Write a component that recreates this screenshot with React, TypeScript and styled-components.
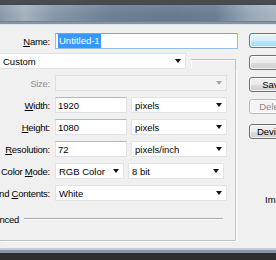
import React from "react";
import styled, { createGlobalStyle } from "styled-components";

const GlobalStyle = createGlobalStyle`
  html, body {
    margin: 0;
    padding: 0;
    background: #2e2e2e;
  }
  body {
    font-family: "Liberation Sans", Arial, sans-serif;
    font-size: 9.5px;
    color: #000;
  }
`;

const Window = styled.div`
  width: 276px;
  height: 260px;
  overflow: hidden;
  display: flex;
  flex-direction: column;
`;

const TitleBar = styled.div`
  height: 25px;
  flex: none;
  display: flex;
  flex-direction: column;
  background: #4a4a4a;
  border-top: 3px solid #4b4b4b;
  box-sizing: border-box;
`;

const Glass = styled.div`
  flex: 1;
  border-top: 2px solid #3e4b5b;
  border-bottom: 2px solid #8494a5;
  box-shadow: inset 0 -1px 0 #6f8194;
  background:
    linear-gradient(180deg, rgba(255, 255, 255, 0.1), rgba(255, 255, 255, 0) 60%),
    linear-gradient(
      90deg,
      #8998a9 0%,
      #a4b1be 9%,
      #8696a8 20%,
      #6d7f94 40%,
      #66798f 62%,
      #6a7d93 78%,
      #97a7b7 90%,
      #a9b5c2 100%
    );
`;

const TitleEdge = styled.div`
  height: 1px;
  background: #dfe6ec;
`;

const Body = styled.div`
  height: 223px;
  flex: none;
  display: flex;
  background: #f0f0f0;
  padding-top: 8px;
  box-sizing: border-box;
`;

const Main = styled.div`
  width: 238px;
  flex: none;
  display: flex;
  flex-direction: column;
`;

const Row = styled.div`
  display: grid;
  grid-template-columns: 50px auto;
  column-gap: 5px;
  height: 16px;
`;

const Fields = styled.div`
  display: flex;
  gap: 4px;
`;

const Label = styled.div<{ $disabled?: boolean }>`
  display: flex;
  justify-content: flex-end;
  align-items: center;
  overflow: hidden;
  white-space: nowrap;
  letter-spacing: -0.25px;
  color: ${(p) => (p.$disabled ? "#8d8d8d" : "#000")};
`;

const TextBox = styled.div<{ $w: number; $focused?: boolean }>`
  width: ${(p) => p.$w}px;
  box-sizing: border-box;
  display: flex;
  align-items: center;
  padding-left: 2px;
  background: #fff;
  border: 1px solid ${(p) => (p.$focused ? "#8fc0ea" : "#dde1e6")};
  border-top-color: ${(p) => (p.$focused ? "#6fa8dc" : "#b4b8bf")};
  white-space: nowrap;
`;

const Selected = styled.span`
  background: #3399ff;
  color: #fff;
  padding: 1px 1px 2px;
`;

const ComboBox = styled.div<{ $w: number; $disabled?: boolean; $open?: boolean }>`
  width: ${(p) => p.$w}px;
  box-sizing: border-box;
  display: flex;
  align-items: center;
  justify-content: space-between;
  padding: 0 4px 0 3px;
  background: ${(p) => (p.$disabled ? "#f3f3f3" : "#fff")};
  border: 1px solid ${(p) => (p.$disabled ? "#e0e0e0" : "#e3e3e3")};
  border-left-width: ${(p) => (p.$open ? 0 : 1)}px;
  white-space: nowrap;
`;

const Arrow = styled.span<{ $disabled?: boolean }>`
  width: 0;
  height: 0;
  border-left: 3px solid transparent;
  border-right: 3px solid transparent;
  border-top: 4px solid ${(p) => (p.$disabled ? "#a6a6a6" : "#111")};
`;

const PresetRow = styled.div`
  display: flex;
  height: 16px;
  margin-top: 4px;
`;

const Corner = styled.div`
  width: 44px;
  margin: 6px 0 0 5px;
  border-top: 1px solid #c2c2c2;
  border-right: 1px solid #c2c2c2;
  box-shadow: inset 1px 1px 0 #fff;
`;

const Group = styled.div`
  width: 236px;
  box-sizing: border-box;
  height: 172px;
  display: flex;
  flex-direction: column;
  padding-top: 6px;
  border-right: 1px solid #c2c2c2;
  border-bottom: 1px solid #c2c2c2;
  box-shadow: 1px 1px 0 #fff;
`;

const Rows = styled.div`
  display: flex;
  flex-direction: column;
  gap: 6px;
`;

const AdvancedRow = styled.div`
  display: flex;
  align-items: center;
  gap: 5px;
  height: 12px;
  margin-top: 12px;
`;

const AdvancedLabel = styled.div`
  width: 19px;
  display: flex;
  justify-content: flex-end;
  overflow: hidden;
  white-space: nowrap;
  letter-spacing: -0.25px;
`;

const Rule = styled.div`
  width: 199px;
  height: 0;
  border-top: 1px solid #a9a9a9;
  border-bottom: 1px solid #fff;
`;

const Side = styled.div`
  margin-left: 11px;
  display: flex;
  flex-direction: column;
  gap: 7px;
`;

const Button = styled.div<{ $default?: boolean; $disabled?: boolean; $space?: number }>`
  width: 86px;
  height: 15px;
  flex: none;
  box-sizing: border-box;
  margin-top: ${(p) => p.$space ?? 0}px;
  display: flex;
  align-items: center;
  justify-content: center;
  white-space: nowrap;
  border-radius: 3px;
  border: 1px solid
    ${(p) => (p.$default ? "#3c7fb1" : p.$disabled ? "#b5b9bc" : "#707070")};
  color: ${(p) => (p.$disabled ? "#8a8a8a" : "#000")};
  background: ${(p) =>
    p.$default
      ? "linear-gradient(180deg, #e6f5fd 0%, #d5eefc 50%, #b9e3fa 51%, #a9dbf7 100%)"
      : p.$disabled
      ? "#f4f4f4"
      : "linear-gradient(180deg, #f2f2f2 0%, #ebebeb 50%, #dddddd 51%, #cfcfcf 100%)"};
  box-shadow: inset 0 0 0 1px ${(p) => (p.$disabled ? "#fbfbfb" : "rgba(255,255,255,0.7)")};
`;

const Info = styled.div`
  margin: 48px 0 0 16px;
  white-space: nowrap;
`;

const BottomFrame = styled.div`
  flex: 1;
  background: #2e2e2e;
  border-top: 2px solid #c3ccd5;
  box-shadow: inset 0 3px 0 #8895a3;
`;

const Combo = ({ value, w, disabled, open }: { value: string; w: number; disabled?: boolean; open?: boolean }) => (
  <ComboBox $w={w} $disabled={disabled} $open={open}>
    <span>{value}</span>
    <Arrow $disabled={disabled} />
  </ComboBox>
);

export default function App() {
  return (
    <>
      <GlobalStyle />
      <Window>
        <TitleBar>
          <Glass />
          <TitleEdge />
        </TitleBar>
        <Body>
          <Main>
            <Row>
              <Label>
                <span>
                  <u>N</u>ame:
                </span>
              </Label>
              <TextBox $w={183} $focused>
                <Selected>Untitled-1</Selected>
              </TextBox>
            </Row>
            <PresetRow>
              <Combo value="Custom" w={186} open />
              <Corner />
            </PresetRow>
            <Group>
              <Rows>
                <Row>
                  <Label $disabled>Size:</Label>
                  <Combo value="" w={172} disabled />
                </Row>
                <Row>
                  <Label>
                    <span>
                      <u>W</u>idth:
                    </span>
                  </Label>
                  <Fields>
                    <TextBox $w={72}>1920</TextBox>
                    <Combo value="pixels" w={96} />
                  </Fields>
                </Row>
                <Row>
                  <Label>
                    <span>
                      <u>H</u>eight:
                    </span>
                  </Label>
                  <Fields>
                    <TextBox $w={72}>1080</TextBox>
                    <Combo value="pixels" w={96} />
                  </Fields>
                </Row>
                <Row>
                  <Label>
                    <span>
                      <u>R</u>esolution:
                    </span>
                  </Label>
                  <Fields>
                    <TextBox $w={72}>72</TextBox>
                    <Combo value="pixels/inch" w={96} />
                  </Fields>
                </Row>
                <Row>
                  <Label>
                    <span>
                      Color <u>M</u>ode:
                    </span>
                  </Label>
                  <Fields>
                    <Combo value="RGB Color" w={69} />
                    <Combo value="8 bit" w={96} />
                  </Fields>
                </Row>
                <Row>
                  <Label>
                    <span>
                      Background <u>C</u>ontents:
                    </span>
                  </Label>
                  <Combo value="White" w={172} />
                </Row>
              </Rows>
              <AdvancedRow>
                <AdvancedLabel>
                  <span>Advanced</span>
                </AdvancedLabel>
                <Rule />
              </AdvancedRow>
            </Group>
          </Main>
          <Side>
            <Button $default>OK</Button>
            <Button>Cancel</Button>
            <Button>Save Preset...</Button>
            <Button $disabled>Delete Preset...</Button>
            <Button $space={3}>Device Central...</Button>
            <Info>Image Size:</Info>
          </Side>
        </Body>
        <BottomFrame />
      </Window>
    </>
  );
}
